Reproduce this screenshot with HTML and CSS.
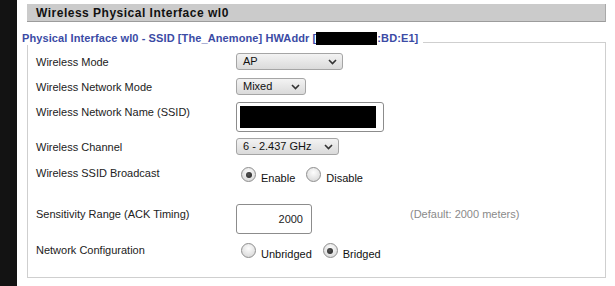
FILE: index.html
```html
<!DOCTYPE html>
<html lang="en">
<head>
    <meta charset="UTF-8">
    <title>Wireless</title>
    <link rel="stylesheet" href="styles.css">
</head>
<body>
    <div class="page">
        <aside class="sidebar"></aside>
        <main class="content">
            <h2 class="section-head">Wireless Physical Interface wl0</h2>

            <div class="legend-row">
                <span class="legend">Physical Interface wl0 - SSID [The_Anemone] HWAddr [<span class="redacted-text"></span>:BD:E1]</span>
                <span class="legend-line"></span>
            </div>

            <div class="panel">
                <div class="row row-mode">
                    <div class="label">Wireless Mode</div>
                    <div class="select select-mode">
                        <span>AP</span>
                        <svg width="9" height="6" viewBox="0 0 9 6"><path d="M1 1l3.5 3.5L8 1" fill="none" stroke="#333" stroke-width="1.6"/></svg>
                    </div>
                </div>

                <div class="row row-netmode">
                    <div class="label">Wireless Network Mode</div>
                    <div class="select select-netmode">
                        <span>Mixed</span>
                        <svg width="9" height="6" viewBox="0 0 9 6"><path d="M1 1l3.5 3.5L8 1" fill="none" stroke="#333" stroke-width="1.6"/></svg>
                    </div>
                </div>

                <div class="row row-ssid">
                    <div class="label label-input">Wireless Network Name (SSID)</div>
                    <div class="text-input">
                        <span class="redacted"></span>
                    </div>
                </div>

                <div class="row row-channel">
                    <div class="label">Wireless Channel</div>
                    <div class="select select-channel">
                        <span>6 - 2.437 GHz</span>
                        <svg width="9" height="6" viewBox="0 0 9 6"><path d="M1 1l3.5 3.5L8 1" fill="none" stroke="#333" stroke-width="1.6"/></svg>
                    </div>
                </div>

                <div class="row row-broadcast">
                    <div class="label label-radio">Wireless SSID Broadcast</div>
                    <div class="radio-group">
                        <label class="option"><span class="radio checked"></span><span class="option-text">Enable</span></label>
                        <label class="option"><span class="radio"></span><span class="option-text">Disable</span></label>
                    </div>
                </div>

                <div class="row row-ack">
                    <div class="label label-input">Sensitivity Range (ACK Timing)</div>
                    <div class="number-input">2000</div>
                    <div class="hint">(Default: 2000 meters)</div>
                </div>

                <div class="row row-bridge">
                    <div class="label label-radio2">Network Configuration</div>
                    <div class="radio-group">
                        <label class="option"><span class="radio"></span><span class="option-text">Unbridged</span></label>
                        <label class="option"><span class="radio checked"></span><span class="option-text">Bridged</span></label>
                    </div>
                </div>
            </div>
        </main>
    </div>
</body>
</html>
```

FILE: styles.css
```css
* {
    margin: 0;
    padding: 0;
    box-sizing: border-box;
}

body {
    font-family: "Liberation Sans", Arial, sans-serif;
    font-size: 11px;
    color: #222;
    background: #fff;
}

.page {
    display: flex;
    min-height: 286px;
}

.sidebar {
    width: 17px;
    flex-shrink: 0;
    background: #131313;
}

.content {
    flex: 1;
    padding: 4px 9px 0 10px;
}

.section-head {
    height: 18px;
    padding: 1px 0 0 9px;
    font-size: 12px;
    line-height: 16px;
    font-weight: bold;
    letter-spacing: 0.5px;
    color: #111;
    background: #cbcbcb;
    border-right: 1px solid #a9a9a9;
    border-bottom: 1px solid #9c9c9c;
}

.legend-row {
    display: flex;
    margin-top: 10px;
    margin-left: -5px;
    height: 13px;
}

.legend {
    font-size: 11px;
    line-height: 13px;
    font-weight: bold;
    letter-spacing: 0.1px;
    color: #3b4ba5;
    white-space: nowrap;
    display: flex;
}

.redacted-text {
    display: inline-block;
    width: 61px;
    height: 13px;
    background: #000;
}

.legend-line {
    flex: 1;
    margin-left: 5px;
    margin-top: 10px;
    border-top: 1px solid #cfcfcf;
    border-right: 1px solid #cfcfcf;
}

.panel {
    border: 1px solid #cfcfcf;
    border-top: none;
    padding: 8px 0 10px 8px;
}

.row {
    display: flex;
    align-items: flex-start;
}

.row-mode { height: 25px; }
.row-netmode { height: 24px; }
.row-ssid { height: 36px; }
.row-channel { height: 29px; }
.row-broadcast { height: 37px; }
.row-ack { height: 39px; }
.row-bridge { height: 24px; }

.label {
    width: 200px;
    flex-shrink: 0;
    line-height: 13px;
    padding-top: 3px;
}

.label-input {
    padding-top: 4px;
}

.label-radio {
    padding-top: 0;
}

.label-radio2 {
    padding-top: 1px;
}

.select {
    display: flex;
    align-items: center;
    justify-content: space-between;
    height: 17px;
    padding: 0 5px 0 6px;
    border: 1px solid #a5a5a5;
    border-radius: 3px;
    background: linear-gradient(#f3f3f3, #dadada);
    color: #111;
    line-height: 13px;
}

.select-mode { width: 107px; }
.select-netmode { width: 70px; }
.select-channel { width: 103px; }

.text-input {
    width: 148px;
    height: 30px;
    padding: 3px;
    border: 1px solid #8c8c8c;
    border-radius: 3px;
    background: #fff;
}

.redacted {
    display: block;
    width: 136px;
    height: 22px;
    background: #000;
}

.number-input {
    width: 76px;
    height: 30px;
    padding-right: 8px;
    border: 1px solid #8c8c8c;
    border-radius: 3px;
    text-align: right;
    line-height: 28px;
    color: #222;
}

.hint {
    margin-left: 98px;
    padding-top: 4px;
    line-height: 13px;
    color: #8a8a8a;
}

.radio-group {
    display: flex;
}

.option {
    display: flex;
    align-items: flex-start;
    margin-right: 6px;
}

.radio {
    width: 15px;
    height: 15px;
    margin-left: 5px;
    border: 1px solid #8e8e8e;
    border-radius: 50%;
    background: radial-gradient(circle at 50% 35%, #fdfdfd, #d2d2d2);
    display: flex;
    align-items: center;
    justify-content: center;
}

.radio.checked::after {
    content: '';
    width: 6px;
    height: 6px;
    border-radius: 50%;
    background: radial-gradient(circle at 40% 40%, #555, #222);
}

.option-text {
    margin-left: 5px;
    margin-top: 5px;
    line-height: 13px;
    color: #111;
}
```
